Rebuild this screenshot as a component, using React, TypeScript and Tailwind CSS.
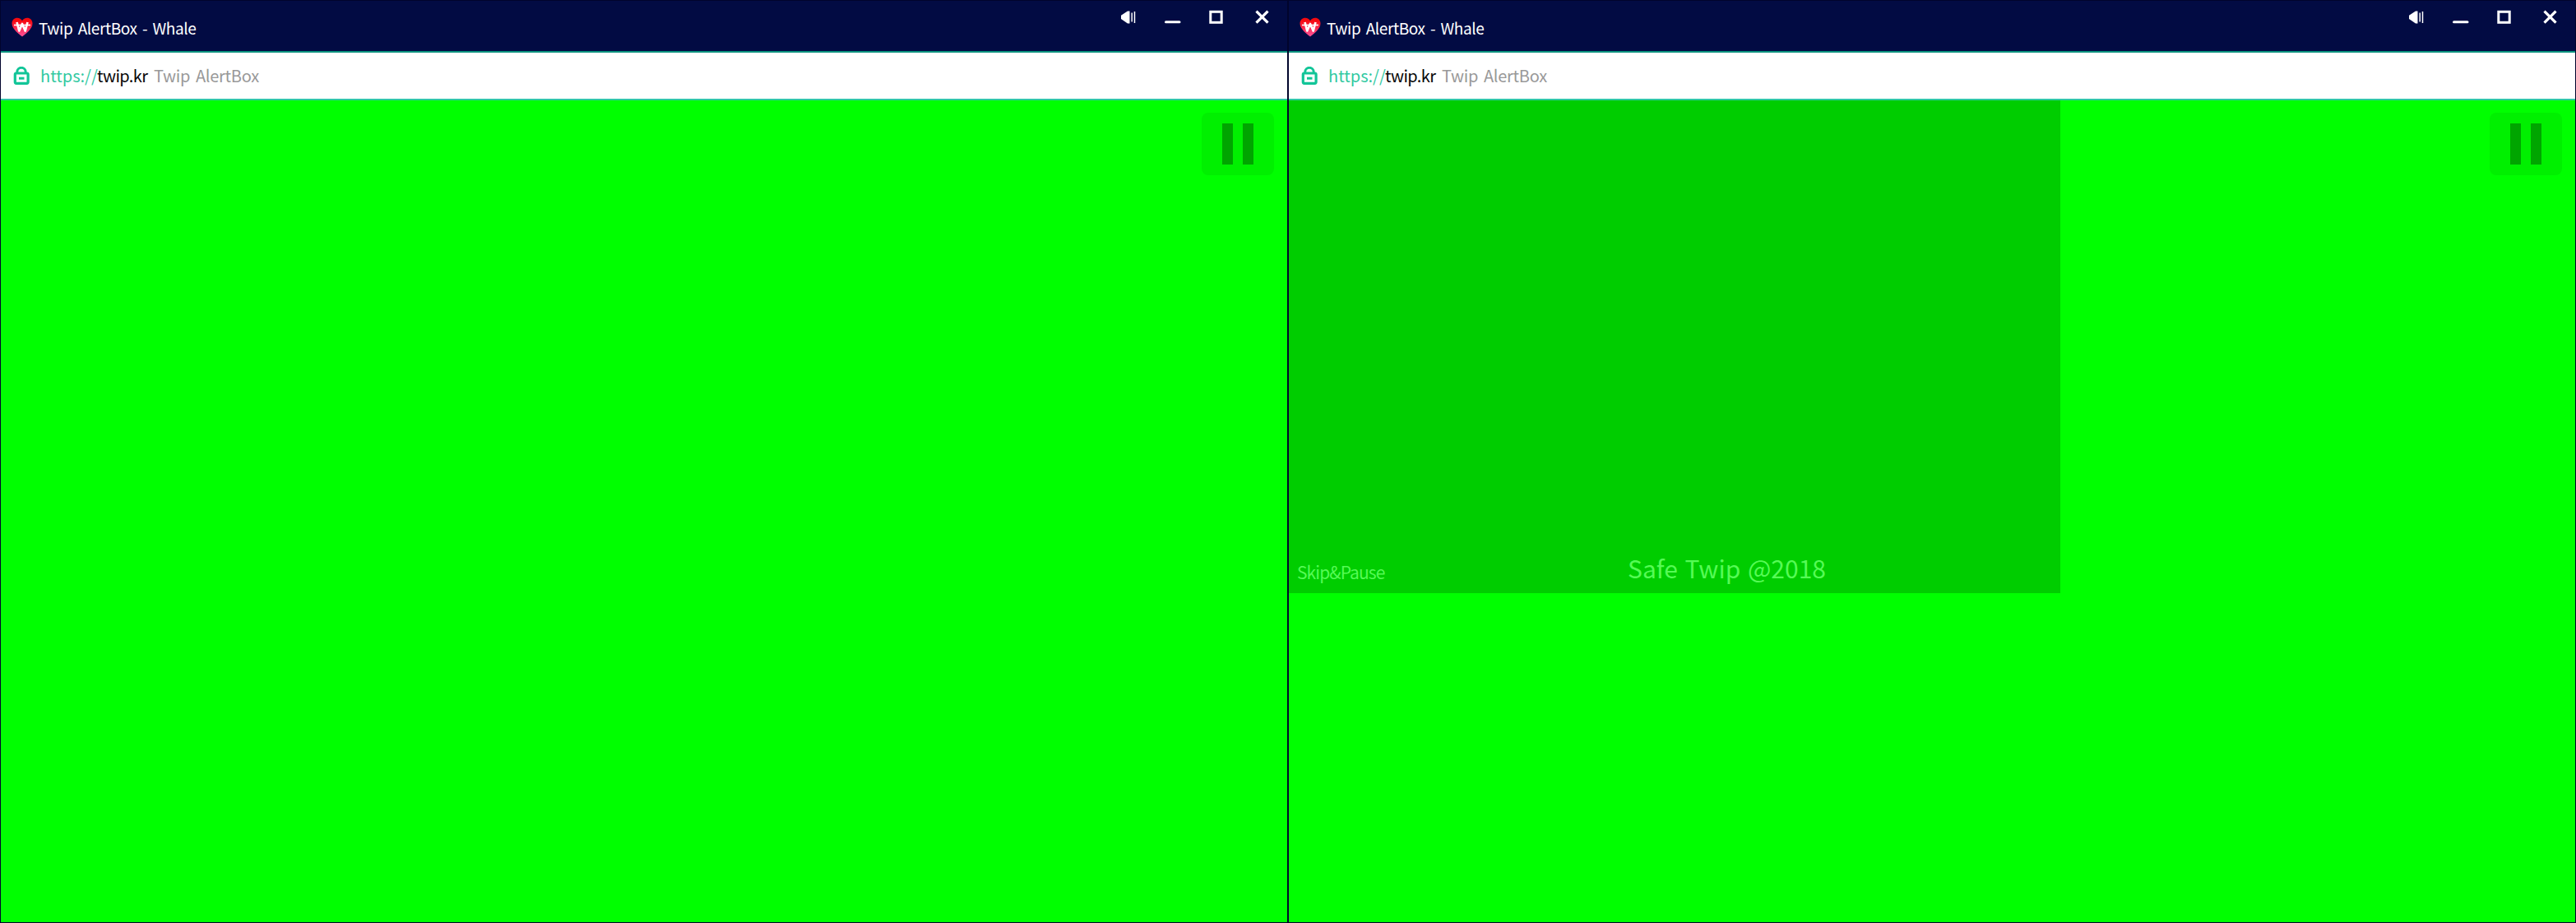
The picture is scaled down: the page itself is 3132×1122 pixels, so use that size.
import React from "react";

function Heart() {
  return (
    <svg width="26" height="24" viewBox="0 0 26 24" className="block">
      <defs>
        <linearGradient id="heart" x1="0" y1="0" x2="0" y2="1">
          <stop offset="0.15" stopColor="#f50a10" />
          <stop offset="0.9" stopColor="#ff4a8c" />
        </linearGradient>
      </defs>
      <path d="M13 23.5C8 19.5.5 14 .5 7.5.5 3.500 3.500.8 7 .8c2.600 0 4.800 1.300 6 3.500C14.200 2.100 16.400.8 19 .8c3.500 0 6.500 2.700 6.500 6.700C25.500 14 18 19.500 13 23.500Z" fill="url(#heart)" />
      <path d="M6.500 6l2.800 10.500L13 8l3.700 8.500L19.500 6" fill="none" stroke="#fff" strokeWidth="2.700" strokeLinejoin="round" />
      <path d="M3 9.500H23" stroke="#fff" strokeWidth="1.600" />
    </svg>
  );
}

function Lock() {
  return (
    <svg width="20" height="22" viewBox="0 0 20 22" fill="none" stroke="#12c598" className="block">
      <path d="M4.800 8V6.500a5.200 5.200 0 0 1 10.400 0V8" strokeWidth="3" />
      <rect x="2.300" y="8" width="15.800" height="12.300" rx="1.500" strokeWidth="3.200" />
      <path d="M7 14.200H13.500" strokeWidth="3" />
    </svg>
  );
}

function Controls() {
  return (
    <svg width="182" height="18" viewBox="0 0 182 18" fill="none" stroke="#fff" className="block">
      <path d="M1 6.800 9 1.500h2.500v15H9L1 11Z" fill="#fff" stroke="none" />
      <path d="M14.200 3.500v11" strokeWidth="1.500" />
      <path d="M17.500 2v14" strokeWidth="1.500" />
      <path d="M55.500 14.700h16.500" strokeWidth="3" strokeLinecap="round" />
      <rect x="109.800" y="2.300" width="13.400" height="13" strokeWidth="3" />
      <path d="M165.500 1.700l14 14M179.500 1.700l-14 14" strokeWidth="3.200" />
    </svg>
  );
}

function Window({ children }: { children?: React.ReactNode }) {
  return (
    <section className="flex h-[1122px] w-[1566px] flex-col border border-[#01042c] bg-[#00ff00]">
      <header className="flex h-[61px] shrink-0 items-start justify-between bg-[#020b43] pl-[13px] pr-[21px]">
        <div className="flex items-start pt-5">
          <Heart />
          <h1 className="ml-[7px] mt-[-1px] whitespace-nowrap text-[19px] leading-[28px] tracking-[-0.4px] text-white [word-spacing:2.5px]">
            Twip AlertBox - Whale
          </h1>
        </div>
        <div className="pt-[11px]">
          <Controls />
        </div>
      </header>
      <div className="flex h-[60px] shrink-0 items-start border-b-2 border-t-2 border-b-[#30c8a8] border-t-[#0b927f] bg-white pl-[15px]">
        <div className="mt-[17px]">
          <Lock />
        </div>
        <div className="ml-[13px] mt-[14px] flex whitespace-nowrap text-[20px] leading-[28px]">
          <span className="w-[69px] text-[#32c9a2]">https://</span>
          <span className="w-[69px] tracking-[-0.6px] text-[#080808]">twip.kr</span>
          <span className="tracking-[-0.25px] text-[#999] [word-spacing:2.5px]">Twip AlertBox</span>
        </div>
      </div>
      <main className="relative flex-1">
        {children}
        <button aria-label="Pause" className="absolute right-[16px] top-[15px] flex h-[76px] w-[88px] items-center justify-center gap-[12px] rounded-lg bg-[#00f000]">
          <span className="h-[50px] w-[13px] bg-[#00a500]" />
          <span className="h-[50px] w-[13px] bg-[#00a500]" />
        </button>
      </main>
    </section>
  );
}

export default function App() {
  return (
    <div className="flex h-[1122px] w-[3132px] overflow-hidden font-['Noto_Sans_CJK_KR','Noto_Sans',sans-serif]">
      <Window />
      <Window>
        <div className="flex h-[599px] w-[938px] items-end bg-[#00cd00] text-[#55fa55]">
          <span className="mb-[11px] ml-[10px] w-[402px] whitespace-nowrap text-[21px] leading-[30px] tracking-[-0.9px]">Skip&amp;Pause</span>
          <span className="mb-[10px] whitespace-nowrap text-[30px] leading-[42px] [word-spacing:2px]">Safe Twip @2018</span>
        </div>
      </Window>
    </div>
  );
}
